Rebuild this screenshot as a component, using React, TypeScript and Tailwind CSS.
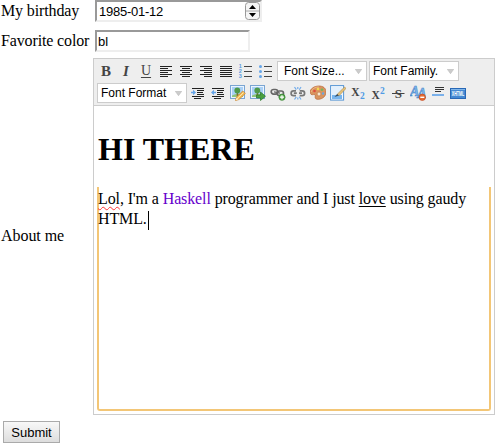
import React from "react";

type IconProps = { children: React.ReactNode };

function Icon({ children }: IconProps) {
  return (
    <svg width="16" height="16" viewBox="0 0 16 16" className="block shrink-0">
      {children}
    </svg>
  );
}

const LETTER = "h-4 w-4 shrink-0 text-center font-['Liberation_Serif',serif] text-[#444]";

function Lines({ rows }: { rows: [number, number, number][] }) {
  return (
    <Icon>
      {rows.map(([x, y, w]) => (
        <rect key={`${x}-${y}`} x={x} y={y} width={w} height="1" fill="#222" />
      ))}
    </Icon>
  );
}

function Digit({ y, children }: { y: number; children: string }) {
  return (
    <text x="0.8" y={y} fontFamily="Liberation Sans, sans-serif" fontSize="5.5" fontWeight="bold" fill="#5b9be0">
      {children}
    </text>
  );
}

function Select({ label, pad }: { label: string; pad: string }) {
  return (
    <div className={`flex h-5 w-[90px] shrink-0 items-center justify-between border border-[#ccc] bg-white pr-1 text-xs leading-4 text-black ${pad}`}>
      <span className="whitespace-nowrap">{label}</span>
      <svg width="7" height="5" viewBox="0 0 7 5">
        <path d="M.3 .3h6.4L3.5 4.7z" fill="#ccc" stroke="#bbb" strokeWidth=".6" />
      </svg>
    </div>
  );
}

function IndentIcon({ out = false }: { out?: boolean }) {
  return (
    <Icon>
      <path d="M2 3.5h12M7 5.5h7M7 7.5h6M7 9.5h7M2 11.5h12M4 13.5h7" stroke="#222" />
      <path d={out ? "M1 7.5L4 4.8v2h2v1.5H4v2z" : "M6 7.5L3 4.8v2H1v1.5h2v2z"} fill="#65a5e9" />
    </Icon>
  );
}

function Photo() {
  return (
    <>
      <rect x=".5" y=".5" width="14" height="13" fill="#eaf4ff" stroke="#7aa5d2" />
      <rect x="2" y="2" width="11" height="10" fill="#a9d0f6" />
      <path d="M2 10.5q5-3 11-1V12H2z" fill="#8fc47a" />
      <path d="M6.7 7h1.4v4H6.7z" fill="#806a3d" />
      <circle cx="7.3" cy="5.5" r="2.9" fill="#4f9a4a" />
    </>
  );
}

function Chain() {
  return (
    <g fill="none" stroke="#666" strokeWidth="1.7">
      <rect x="1.2" y="4.5" width="6.5" height="4.6" rx="2.3" />
      <rect x="7" y="6" width="6.5" height="4.6" rx="2.3" />
      <path d="M4 6.8l6 1.4" strokeWidth="1.3" />
    </g>
  );
}

function Toolbar() {
  return (
    <div className="flex h-[47px] flex-col gap-0.5 border-b border-[#ccc] bg-[#eee] pt-0.5 font-['Liberation_Sans',sans-serif]">
      <div className="flex h-5 items-center gap-[3px] pl-1">
        <div className="flex gap-1">
          <span className={`${LETTER} text-[15px] leading-4 font-bold`}>B</span>
          <span className={`${LETTER} text-[15px] leading-4 font-bold italic`}>I</span>
          <span className={`${LETTER} text-[14px] leading-[15px] underline underline-offset-2`}>U</span>
          <Lines rows={[[2, 3, 12], [2, 5, 8], [2, 7, 12], [2, 9, 8], [2, 11, 12], [2, 13, 8]]} />
          <Lines rows={[[2, 3, 12], [4, 5, 8], [2, 7, 12], [4, 9, 8], [2, 11, 12], [4, 13, 8]]} />
          <Lines rows={[[2, 3, 12], [6, 5, 8], [2, 7, 12], [6, 9, 8], [2, 11, 12], [6, 13, 8]]} />
          <Lines rows={[[2, 3, 12], [2, 5, 12], [2, 7, 12], [2, 9, 12], [2, 11, 12], [2, 13, 12]]} />
          <Icon>
            <Digit y={5}>1</Digit>
            <Digit y={10}>2</Digit>
            <Digit y={15}>3</Digit>
            <path d="M6 3.5h8M6 8.5h8M6 13.5h8" stroke="#444" />
          </Icon>
          <Icon>
            <path d="M6 3.5h8M6 8.5h8M6 13.5h8" stroke="#444" />
            <g fill="#65a5e9">
              <circle cx="2.5" cy="3.5" r="1.5" />
              <circle cx="2.5" cy="8.5" r="1.5" />
              <circle cx="2.5" cy="13.5" r="1.5" />
            </g>
          </Icon>
        </div>
        <div className="flex gap-0.5">
          <Select label="Font Size..." pad="pl-1.5" />
          <Select label="Font Family." pad="pl-[3px]" />
        </div>
      </div>
      <div className="flex h-5 items-center gap-[3px] pl-[3px]">
        <Select label="Font Format" pad="pl-[3px]" />
        <div className="flex gap-1">
          <IndentIcon />
          <IndentIcon out />
          <Icon>
            <Photo />
            <path d="M5.5 15.5l1-3.5 6.3-6 2.5 2.5-6.3 6z" fill="#f4bd55" stroke="#c57b22" strokeWidth=".7" />
            <path d="M5.7 15.3l1-2.8 2 1.8z" fill="#fff0cc" />
            <path d="M8 12.8l5.5-5.2" stroke="#ffe7ac" />
          </Icon>
          <Icon>
            <Photo />
            <path d="M6.5 10h4V7l5 4.2-5 4.3V13h-4z" fill="#4aa040" stroke="#28752b" strokeWidth=".7" />
          </Icon>
          <Icon>
            <Chain />
            <circle cx="12" cy="12.2" r="3.1" fill="#58a94d" stroke="#34812f" strokeWidth=".7" />
            <path d="M12 10.2v4M10 12.2h4" stroke="white" strokeWidth="1.2" />
          </Icon>
          <Icon>
            <g fill="none" stroke="#777" strokeWidth="1.7">
              <path d="M6 5.8H3.5a2.3 2.3 0 0 0 0 4.8H6M9.7 5.8h2.5a2.3 2.3 0 0 1 0 4.8H9.7" />
              <path d="M3.8 8.2h3M9 8.2h3" />
            </g>
            <path d="M4.5 2l1.8 2.7M11 2L9.3 4.7M4.5 14.5l1.8-2.7M11 14.5l-1.7-2.7M7.8 2v2M7.8 12.5v2" stroke="#72acea" strokeWidth="1.2" />
          </Icon>
          <Icon>
            <path d="M9 1C4 1 0 4 0 7.3c0 2 1.7 2.8 3.4 2.3 1.8-.5 2 .7 1.8 2-.3 2 .8 3 3.6 2.7C13 13.8 16 11 16 7s-3-6-7-6z" fill="#d9945f" stroke="#b76432" strokeWidth=".7" />
            <path d="M1.2 7C2 3.5 5 2 9 2" fill="none" stroke="#efb580" />
            <circle cx="4.5" cy="6" r="1.3" fill="#df4a3b" />
            <circle cx="8" cy="4" r="1.3" fill="#f3d94d" />
            <circle cx="12" cy="4.8" r="1.3" fill="#73b85d" />
            <circle cx="13" cy="8.5" r="1.2" fill="#6aa6e0" />
            <circle cx="9" cy="9" r="1.9" fill="#f6e5cc" stroke="#b76432" strokeWidth=".5" />
          </Icon>
          <Icon>
            <rect x=".6" y=".6" width="13" height="14.5" fill="#f3f9ff" stroke="#5695d4" />
            <path d="M2 2h10v11H2z" fill="#e2f0fd" />
            <path d="M2 10h10v4H2z" fill="#78b5ed" />
            <path d="M7 10.5l1-2L14.5 2 16 3.4 9.2 10.6z" fill="#e7c379" stroke="#a98446" strokeWidth=".6" />
            <path d="M4.5 12l2.6-3 1.8 1.6z" fill="#354b5e" />
          </Icon>
          <Icon>
            <text x="1.2" y="10.5" fontFamily="Liberation Serif, serif" fontSize="11.5" fontWeight="bold" fill="#444">X</text>
            <text x="10" y="13.5" fontFamily="Liberation Serif, serif" fontSize="9.5" fontWeight="bold" fill="#519be5">2</text>
          </Icon>
          <Icon>
            <text x="1.5" y="14" fontFamily="Liberation Serif, serif" fontSize="11.5" fontWeight="bold" fill="#444">X</text>
            <text x="10" y="8.5" fontFamily="Liberation Serif, serif" fontSize="9.5" fontWeight="bold" fill="#519be5">2</text>
          </Icon>
          <Icon>
            <text x="4.8" y="12.5" fontFamily="Liberation Serif, serif" fontSize="13" fontWeight="bold" fill="#444">S</text>
            <path d="M2 8.5h12.5" stroke="#444" />
          </Icon>
          <Icon>
            <text x="0" y="11" dy="0 2" letterSpacing="-2.2" fontFamily="Liberation Serif, serif" fontSize="14" fontStyle="italic" fontWeight="bold" fill="#82b7ec" stroke="#3d7fc6" strokeWidth=".5">AA</text>
            <circle cx="12.3" cy="12.3" r="3.2" fill="#e56d32" stroke="#c3431b" strokeWidth=".6" />
            <path d="M10.3 12.3h4" stroke="#fff" strokeWidth="1.4" />
          </Icon>
          <Icon>
            <path d="M5 2.5h9M5 4.5h9M5 6.5h6" stroke="#333" />
            <path d="M2 10h12" stroke="#7ab0ea" strokeWidth="2" />
          </Icon>
          <Icon>
            <rect x=".5" y="3.5" width="15" height="10" fill="#4489d3" stroke="#2868b6" />
            <path d="M1 4.5h14" stroke="#82b7eb" />
            <text transform="translate(1.8 11.3) scale(.55 1)" fontFamily="Liberation Sans, sans-serif" fontSize="6.5" fontWeight="bold" fill="white">XHTML</text>
          </Icon>
        </div>
      </div>
    </div>
  );
}

const FIELD = "flex h-[22px] items-center border-2 border-t-[#999] border-r-[#eee] border-b-[#eee] border-l-[#999] bg-white font-['Liberation_Sans',sans-serif] text-[13px]";

export default function App() {
  return (
    <main className="h-[443px] w-[495px] overflow-hidden bg-white font-['Liberation_Serif',serif] text-base leading-5 text-black">
      <div className="flex h-[22px] items-center">
        <label className="w-[95px] shrink-0 pl-px tracking-[-0.12px]">My birthday</label>
        <div className={`${FIELD} w-[167px] justify-between pl-[2px]`}>
          <span className="pt-px tracking-[-0.25px]">1985-01-12</span>
          <svg width="15" height="18" viewBox="0 0 15 18" className="block">
            <rect x=".5" y=".5" width="14" height="17" rx="3" fill="#f5f5f5" stroke="#999" />
            <path d="M1 9h13" stroke="#aaa" />
            <path d="M4 7L7.5 3L11 7zM4 11L7.5 15L11 11z" fill="#000" />
          </svg>
        </div>
      </div>
      <div className="mt-2 flex h-[22px] items-center">
        <label className="w-[95px] shrink-0 pl-px tracking-[-0.14px]">Favorite color</label>
        <div className={`${FIELD} w-[155px] pl-px`}>
          <span className="pt-px">bl</span>
        </div>
      </div>
      <div className="mt-1.5 flex h-[357px] items-center">
        <label className="w-[93px] shrink-0 pb-px pl-px tracking-[-0.05px]">About me</label>
        <section className="flex h-[357px] w-[402px] flex-col border border-[#ccc]">
          <Toolbar />
          <div className="flex h-[308px] flex-col px-[3px] pb-[3px]">
            <h1 className="h-[81px] shrink-0 pt-[25px] pl-px text-[32px] leading-9 font-bold">HI THERE</h1>
            <div className="h-56 shrink-0 rounded-b-[3px] border-2 border-t-0 border-[#f3c676] pt-0.5">
              <p className="-ml-px whitespace-nowrap tracking-[-0.118px]">
                <span className="underline decoration-[#f33] decoration-wavy decoration-[0.7px] underline-offset-2">Lol</span>, I'm a{" "}
                <span className="text-[#60c]">Haskell</span> programmer and I just <span className="underline underline-offset-2">love</span> using gaudy
                <br />
                HTML.<span className="ml-px inline-block h-[19px] w-px bg-black align-middle" />
              </p>
            </div>
          </div>
        </section>
      </div>
      <button className="mt-1.5 ml-[3px] flex h-[22px] w-[57px] items-center justify-center border border-[#aaa] bg-linear-to-b from-[#f8f8f8] to-[#ddd] pt-px font-['Liberation_Sans',sans-serif] text-[13px]">
        Submit
      </button>
    </main>
  );
}
